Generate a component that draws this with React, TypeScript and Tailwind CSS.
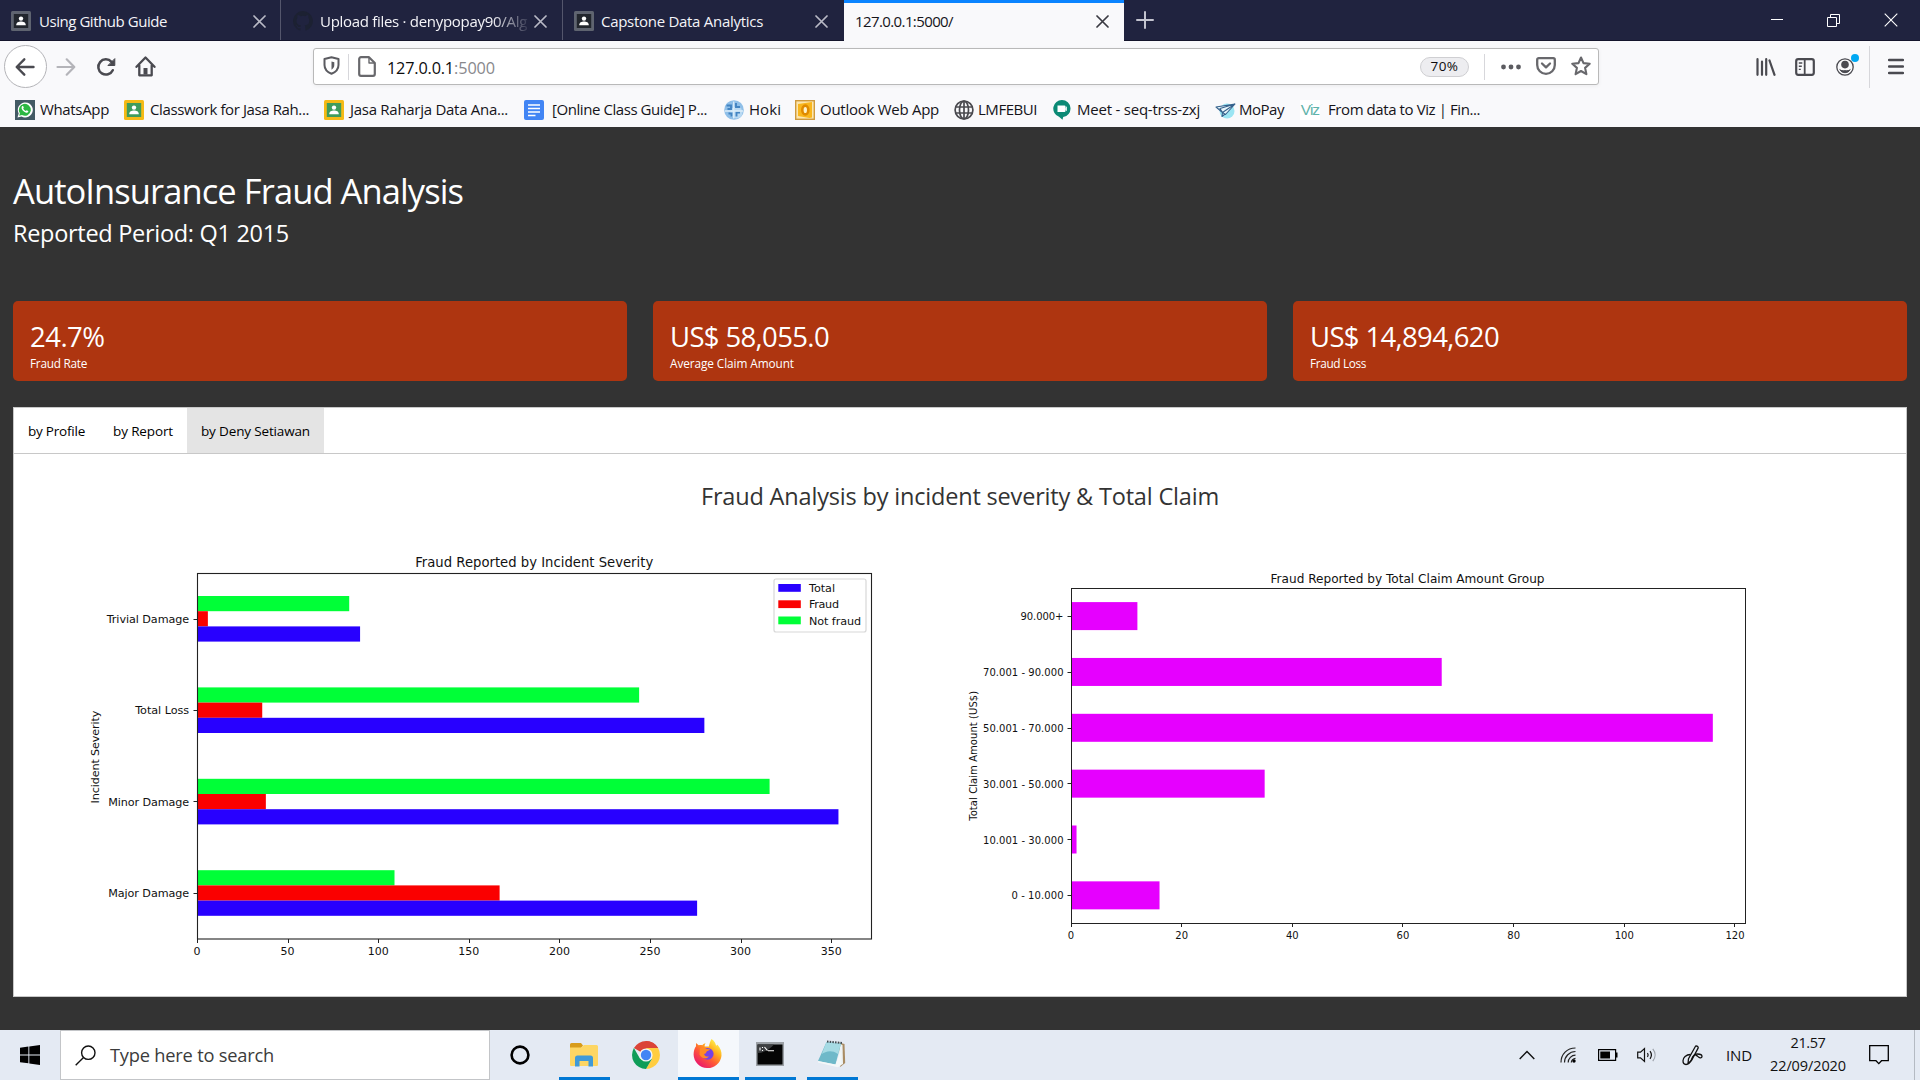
import { useLayoutEffect, useRef, useState } from "react";
import type { ReactNode } from "react";

/* A single line of text whose letter spacing is adjusted to span the given width. */
function Label({ text, width, className = "" }: { text: string; width: number; className?: string }) {
  const ref = useRef<HTMLSpanElement>(null);
  const [spacing, setSpacing] = useState(0);
  useLayoutEffect(() => {
    if (ref.current) {
      const natural = ref.current.getBoundingClientRect().width;
      setSpacing((width - natural) / text.length);
    }
  }, [text, width]);
  return (
    <span ref={ref} className={`inline-block shrink-0 whitespace-pre ${className}`} style={{ letterSpacing: `${spacing}px` }}>
      {text}
    </span>
  );
}

function CloseIcon({ className = "text-[#b9bac6]" }: { className?: string }) {
  return (
    <svg width="13" height="13" viewBox="0 0 13 13" className={className}>
      <path d="M1 1l11 11M12 1L1 12" stroke="currentColor" strokeWidth="1.7" strokeLinecap="round" />
    </svg>
  );
}

function Person({ frame, board }: { frame: string; board: string }) {
  return (
    <svg width="20" height="20" viewBox="0 0 20 20" preserveAspectRatio="none" className="shrink-0">
      <rect width="20" height="20" rx="1.5" fill={frame} />
      <rect x="2.8" y="3" width="14.4" height="14" fill={board} />
      <circle cx="10" cy="7.6" r="2.2" fill="#fff" />
      <path d="M5.2 14.2c0-2.6 2.4-3.6 4.8-3.6s4.8 1 4.8 3.6z" fill="#fff" />
    </svg>
  );
}

function TabBar() {
  return (
    <div className="flex h-[41px] border-b border-[#14152c] bg-[#20233f] text-[15px] text-[#f4f4f8]">
      <div className="flex w-[281px] items-center border-r border-[#54566c] pt-0.5 pl-[11px]">
        <Person frame="#5f6470" board="#22262d" />
        <Label text="Using Github Guide" width={128} className="ml-2" />
        <span className="mr-[14px] ml-auto"><CloseIcon /></span>
      </div>
      <div className="flex w-[282px] items-center border-r border-[#54566c] pt-0.5 pl-3">
        <svg width="20" height="20" viewBox="0 0 16 16" className="shrink-0">
          <path fill="#1c2132" d="M8 0a8 8 0 0 0-2.5 15.6c.4 0 .5-.2.5-.4v-1.400c-2.200.5-2.700-1-2.700-1-.4-.9-.9-1.200-.9-1.200-.7-.5 0-.5 0-.5.8.1 1.200.8 1.200.8.7 1.200 1.900.9 2.300.7.100-.5.300-.9.500-1.100-1.800-.2-3.600-.9-3.600-4 0-.9.3-1.600.8-2.100 0-.2-.4-1 .1-2.100 0 0 .7-.2 2.200.8a7.500 7.500 0 0 1 4 0c1.500-1 2.200-.8 2.200-.8.5 1.100.1 1.900.1 2.100.5.500.8 1.200.8 2.100 0 3.100-1.900 3.800-3.700 4 .3.200.6.700.6 1.500v2.200c0 .2.100.500.500.400A8 8 0 0 0 8 0z" />
        </svg>
        <div className="ml-[7px] w-[208px] overflow-hidden [mask-image:linear-gradient(to_right,black_172px,transparent_212px)]">
          <Label text="Upload files · denypopay90/Alg" width={207} />
        </div>
        <span className="mr-[15px] ml-auto"><CloseIcon /></span>
      </div>
      <div className="flex w-[281px] items-center pt-0.5 pl-[11px]">
        <Person frame="#5f6470" board="#22262d" />
        <Label text="Capstone Data Analytics" width={162} className="ml-[7px]" />
        <span className="mr-4 ml-auto"><CloseIcon /></span>
      </div>
      <div className="-mb-px flex w-[280px] items-center border-t-[3px] border-[#0a84ff] bg-[#f9f9fb] pb-[3px] pl-[11px] text-[#15141a]">
        <Label text="127.0.0.1:5000/" width={98} className="pt-0.5" />
        <span className="mr-[15px] ml-auto pt-0.5"><CloseIcon className="text-[#3a3a42]" /></span>
      </div>
      <svg width="18" height="18" viewBox="0 0 18 18" className="mt-[11px] ml-3">
        <path d="M9 1v16M1 9h16" stroke="#c3c4cf" strokeWidth="2" strokeLinecap="round" />
      </svg>
      <div className="mr-[22px] ml-auto flex items-center text-white">
        <svg width="12" height="12" viewBox="0 0 12 12"><path d="M0 5.500h12" stroke="currentColor" strokeWidth="1" /></svg>
        <svg width="13" height="13" viewBox="0 0 13 13" fill="none" stroke="currentColor" className="mx-[44px] shrink-0">
          <path d="M.5 3.500h9v9h-9zM3.500 3.500v-3h9v9h-3" />
        </svg>
        <svg width="14" height="14" viewBox="0 0 14 14" className="shrink-0"><path d="M.7.7l12.600 12.600M13.300.7L.7 13.300" stroke="currentColor" strokeWidth="1.100" /></svg>
      </div>
    </div>
  );
}

function Cell({ className, children }: { className: string; children: ReactNode }) {
  return <div className={`flex shrink-0 items-center justify-center ${className}`}>{children}</div>;
}

function NavBar() {
  return (
    <div className="flex h-[51px] items-center pl-1 text-[#4a4a50]">
      <div className="flex size-[43px] shrink-0 items-center justify-center rounded-full border border-[#b4b4b8] bg-white pr-px">
        <svg width="20" height="20" viewBox="0 0 20 20" fill="none" stroke="currentColor" strokeWidth="2.400" strokeLinecap="round" strokeLinejoin="round">
          <path d="M18.500 10H2M9.300 2.300L1.700 10l7.600 7.700" />
        </svg>
      </div>
      <Cell className="w-[38px] text-[#b4b4b9]">
        <svg width="20" height="20" viewBox="0 0 20 20" fill="none" stroke="currentColor" strokeWidth="2.200" strokeLinecap="round" strokeLinejoin="round">
          <path d="M1.500 10H18M10.700 2.300l7.600 7.700-7.600 7.700" />
        </svg>
      </Cell>
      <Cell className="w-[41px]">
        <svg width="20" height="20" viewBox="0 0 20 20" fill="none" stroke="currentColor" strokeWidth="2.500" strokeLinecap="round">
          <path d="M16.800 13.200A7.600 7.600 0 1 1 15.500 4.800l1.500 1.700" />
          <path d="M18.800 2v6.500h-6.500z" fill="currentColor" strokeWidth="1" strokeLinejoin="round" />
        </svg>
      </Cell>
      <Cell className="w-[39px]">
        <svg width="21" height="21" viewBox="0 0 21 21" fill="none" stroke="currentColor" strokeWidth="2.300" strokeLinecap="round" strokeLinejoin="round">
          <path d="M1.500 10.800l9-9.300 9 9.300M4.300 9.500v9.800h12.400V9.500" />
          <path d="M10.500 12v6.500" strokeWidth="4" strokeLinecap="butt" />
        </svg>
      </Cell>
      <div className="ml-[148px] flex h-[37px] w-[1286px] shrink-0 items-center rounded-[3px] border border-[#b9b9b9] bg-white shadow-[0_1px_4px_rgba(0,0,0,0.06)]">
        <Cell className="w-[34px] pb-[2px] text-[#5b5b60]">
          <svg width="17" height="19" viewBox="0 0 17 19" fill="none" stroke="currentColor" strokeWidth="2">
            <path d="M8.500 1.200L15.500 3v6c0 4-2.600 7-7 8.800C4.100 16 1.500 13 1.500 9V3z" strokeLinejoin="round" />
            <path d="M8.500 5.500v8.200c1.700-1.200 2.800-2.500 2.800-4.700V6.200z" fill="currentColor" stroke="none" />
          </svg>
        </Cell>
        <div className="h-[26px] w-px bg-[#d7d7db]" />
        <Cell className="w-[36px] text-[#68686c]">
          <svg width="18" height="21" viewBox="0 0 18 21" fill="none" stroke="currentColor" strokeWidth="2.200" strokeLinejoin="round">
            <path d="M3 1.200h8l5.800 5.800v11a1.800 1.800 0 0 1-1.800 1.800H3a1.800 1.800 0 0 1-1.800-1.800V3A1.800 1.800 0 0 1 3 1.200z" />
            <path d="M11 1.500V7h5.500" strokeWidth="1.400" />
          </svg>
        </Cell>
        <Label text="127.0.0.1" width={67} className="ml-[2px] pt-[3px] text-[16.250px] text-[#0c0c0d]" />
        <Label text=":5000" width={41} className="pt-[3px] text-[16.250px] text-[#88888c]" />
        <div className="mr-[15px] ml-auto flex h-5 w-[49px] items-center justify-center rounded-full border border-[#cfcfd2] bg-[#ededf0] text-[#0c0c0d]">
          <Label text="70%" width={28} className="pt-px text-[13.500px] leading-none" />
        </div>
        <div className="mr-2 h-[26px] w-px bg-[#d7d7db]" />
        <Cell className="w-[35px] text-[#5b5b60]">
          <svg width="20" height="6" viewBox="0 0 20 6" fill="currentColor">
            <circle cx="2.500" cy="3" r="2.400" /><circle cx="10" cy="3" r="2.400" /><circle cx="17.500" cy="3" r="2.400" />
          </svg>
        </Cell>
        <Cell className="w-[36px] pb-px text-[#68686c]">
          <svg width="20" height="18" viewBox="0 0 20 18" fill="none" stroke="currentColor" strokeWidth="2.300" strokeLinecap="round" strokeLinejoin="round">
            <path d="M2.700 1.200h14.600A1.500 1.500 0 0 1 18.800 2.700V8a8.800 8.800 0 0 1-17.600 0V2.700A1.500 1.500 0 0 1 2.700 1.200z" />
            <path d="M6 6.500l4 3.800 4-3.800" />
          </svg>
        </Cell>
        <Cell className="w-[34px] pb-px text-[#68686c]">
          <svg width="20" height="20" viewBox="0 0 20 20" fill="none" stroke="currentColor" strokeWidth="2.100" strokeLinejoin="round">
            <path d="M10 1.500l2.500 5.600 6.200.7-4.600 4.100 1.300 6.300-5.400-3.200-5.400 3.200 1.300-6.300L1.300 7.800l6.200-.7z" />
          </svg>
        </Cell>
      </div>
      <div className="mr-4 ml-auto flex h-full items-center">
        <Cell className="w-[39px]">
          <svg width="20" height="18" viewBox="0 0 20 18" fill="none" stroke="currentColor" strokeWidth="2.200" strokeLinecap="round">
            <path d="M1.500 1.200v15.600M6 3.500v13.300M10.200 1.200v15.600" /><path d="M13.500 2.500L18.500 16.800" />
          </svg>
        </Cell>
        <Cell className="w-[40px]">
          <svg width="20" height="18" viewBox="0 0 20 18" fill="none" stroke="currentColor" strokeWidth="2.200">
            <rect x="1.200" y="1.200" width="17.600" height="15.600" rx="2" /><path d="M9.700 1.500v15" strokeWidth="1.800" /><path d="M3.800 5h3.500M3.800 8.200h3M3.800 11.400h2" strokeWidth="1.400" />
          </svg>
        </Cell>
        <Cell className="relative w-[40px]">
          <svg width="18" height="18" viewBox="0 0 18 18" fill="none" stroke="currentColor">
            <circle cx="9" cy="9" r="8.200" strokeWidth="1.300" />
            <circle cx="9" cy="6.600" r="3.800" fill="currentColor" stroke="none" />
            <path d="M3.800 11.500c1 1.400 2.800 1.200 5.200 1.200s4.200.2 5.200-1.200a5.800 5.800 0 0 1-10.400 0z" fill="currentColor" />
          </svg>
          <span className="absolute -top-[4px] right-[6px] size-2 rounded-full bg-[#00a8f3]" />
        </Cell>
        <div className="ml-[4px] h-[42px] w-px bg-[#d7d7db]" />
        <svg width="16" height="17" viewBox="0 0 16 17" className="ml-[18px]">
          <path d="M1 2h14M1 8.500h14M1 15h14" stroke="currentColor" strokeWidth="2.400" strokeLinecap="round" />
        </svg>
      </div>
    </div>
  );
}

function WhatsAppIcon() {
  return (
    <svg width="20" height="20" viewBox="0 0 20 20">
      <rect width="20" height="20" fill="#435a64" />
      <path d="M2.500 17.500l1.200-4A7.500 7.500 0 1 1 6.500 16.400z" fill="#fff" />
      <path d="M4.200 15.800l.7-2.600A6 6 0 1 1 7 15.100z" fill="#2cb742" />
      <path d="M7.300 6c.6-.3.9 0 1.100.5l.4 1-.6.900c.5 1.200 1.400 2 2.600 2.600l.8-.8 1.600.8c.3.300 0 1.300-.6 1.600-1.700.9-6.500-2.600-6-5.200.1-.6.400-1.200.7-1.400z" fill="#fff" />
    </svg>
  );
}

function DocsIcon() {
  return (
    <svg width="20" height="20" viewBox="0 0 20 20">
      <rect width="20" height="20" rx="2" fill="#4285f4" />
      <path d="M4 5h12M4 8.500h12M4 12h12M4 15.500h7.500" stroke="#fff" strokeWidth="1.600" />
    </svg>
  );
}

function HokiIcon() {
  return (
    <svg width="20" height="20" viewBox="0 0 20 20">
      <circle cx="10" cy="10" r="9.800" fill="#8fbfe8" />
      <circle cx="12.500" cy="12.500" r="6" fill="#b9d9f2" />
      <path d="M2.500 5.500h4.500v3.500H3.500M12 3v4h4M4.500 13.500h3v3M12.500 16.500v-4h3.500" fill="none" stroke="#4384c2" strokeWidth="1.900" />
      <path d="M9.700 1.500v17M1 11h18" stroke="#dcedf9" strokeWidth="1.300" />
    </svg>
  );
}

function OutlookIcon() {
  return (
    <svg width="20" height="20" viewBox="0 0 20 20">
      <rect x=".7" y=".7" width="18.600" height="18.600" fill="#fce6ae" stroke="#cf9a3d" strokeWidth="1.400" />
      <path d="M3 4l14-2v15.500L14.500 18 3 16z" fill="#f9b61c" />
      <ellipse cx="10.300" cy="10" rx="3" ry="4.400" fill="#fff3c9" stroke="#e08a00" strokeWidth="2.600" />
    </svg>
  );
}

function GlobeIcon() {
  return (
    <svg width="20" height="20" viewBox="0 0 20 20" fill="none" stroke="#4a4a4f" strokeWidth="1.700">
      <circle cx="10" cy="10" r="8.900" /><ellipse cx="10" cy="10" rx="4.500" ry="8.900" /><path d="M10 1v18M1.500 7h17M1.500 13h17" />
    </svg>
  );
}

function MeetIcon() {
  return (
    <svg width="18" height="20" viewBox="0 0 18 20">
      <path d="M9 0a8.600 8.600 0 0 1 1.200 17.100L9.500 19.800 6 16.700A8.600 8.600 0 0 1 9 0z" fill="#0b8a75" />
      <path d="M4.500 5.500h7a1 1 0 0 1 1 1v4.500a1 1 0 0 1-1 1h-7z" fill="#fff" /><path d="M12 8l2-1.700v5L12 9.800z" fill="#d5ece8" />
    </svg>
  );
}

function MoPayIcon() {
  return (
    <svg width="21" height="20" viewBox="0 0 21 20">
      <circle cx="12" cy="11" r="7.500" fill="#9be5f3" />
      <path d="M1 7l19-3-9.500 10.500-3-2zM20 4L7.500 12.500M7.500 12.500L5 8.500 20 4M7.500 12.500l-.5 4 3-2.500" fill="#e9f7fc" stroke="#35618c" strokeWidth="1.100" strokeLinejoin="round" />
    </svg>
  );
}

function VizIcon() {
  return (
    <div className="flex h-5 w-5 items-center justify-center bg-white font-['Liberation_Sans',sans-serif] text-[15.500px] leading-none tracking-[-1px] text-[#5fb3aa]">
      Viz
    </div>
  );
}

function Bookmark({ icon, text, width, gap = "gap-[5px]" }: { icon: ReactNode; text: string; width: number; gap?: string }) {
  return (
    <div className={`flex items-center ${gap}`}>
      {icon}
      <Label text={text} width={width} />
    </div>
  );
}

function BookmarksBar() {
  const room = <Person frame="#f5ba15" board="#3f9c5b" />;
  return (
    <div className="grid h-[35px] grid-cols-[109px_200px_200px_200px_71px_159px_99px_162px_85px_200px] items-center pl-[15px] text-[15px] text-[#15141a]">
      <Bookmark icon={<WhatsAppIcon />} text="WhatsApp" width={69} />
      <Bookmark icon={room} text="Classwork for Jasa Rah..." width={159} gap="gap-[6px]" />
      <Bookmark icon={room} text="Jasa Raharja Data Ana..." width={158} gap="gap-[6px]" />
      <Bookmark icon={<DocsIcon />} text="[Online Class Guide] P..." width={155} gap="gap-2" />
      <Bookmark icon={<HokiIcon />} text="Hoki" width={32} gap="gap-[5px]" />
      <Bookmark icon={<OutlookIcon />} text="Outlook Web App" width={119} />
      <Bookmark icon={<GlobeIcon />} text="LMFEBUI" width={59} gap="gap-1" />
      <Bookmark icon={<MeetIcon />} text="Meet - seq-trss-zxj" width={123} gap="gap-[6px]" />
      <Bookmark icon={<MoPayIcon />} text="MoPay" width={45} gap="gap-[3px]" />
      <Bookmark icon={<VizIcon />} text="From data to Viz | Fin..." width={152} gap="gap-2" />
    </div>
  );
}

const stats = [
  { value: "24.7%", valueWidth: 74.5, label: "Fraud Rate", labelWidth: 57 },
  { value: "US$ 58,055.0", valueWidth: 159, label: "Average Claim Amount", labelWidth: 124 },
  { value: "US$ 14,894,620", valueWidth: 189, label: "Fraud Loss", labelWidth: 56 },
];

const severity = [
  { name: "Trivial Damage", w: 82.5, notFraud: 84, fraud: 6, total: 90 },
  { name: "Total Loss", w: 54, notFraud: 244, fraud: 36, total: 280 },
  { name: "Minor Damage", w: 81, notFraud: 316, fraud: 38, total: 354 },
  { name: "Major Damage", w: 81, notFraud: 109, fraud: 167, total: 276 },
];

const legend = [
  { name: "Total", fill: "#2800ff", w: 26, y: 584 },
  { name: "Fraud", fill: "#fa0000", w: 30, y: 600.3 },
  { name: "Not fraud", fill: "#00ff37", w: 52, y: 616.5 },
];

function SeverityChart() {
  const x0 = 197;
  const unit = 1.812;
  const h = 15.2;
  return (
    <svg width="876" height="483" viewBox="14 513 876 483" fill="#111" fontFamily='"DejaVu Sans", sans-serif' fontSize="11.200">
      <text x="534.200" y="566.700" fontSize="13.200" textAnchor="middle" textLength="238">Fraud Reported by Incident Severity</text>
      <text transform="translate(99.300 757) rotate(-90)" textAnchor="middle" textLength="93">Incident Severity</text>
      {severity.map((row, i) => {
        const y = 618.8 + i * 91.4;
        return (
          <g key={row.name}>
            <rect x={x0} y={y - 1.5 * h} width={row.notFraud * unit} height={h} fill="#00ff37" />
            <rect x={x0} y={y - 0.5 * h} width={row.fraud * unit} height={h} fill="#fa0000" />
            <rect x={x0} y={y + 0.5 * h} width={row.total * unit} height={h} fill="#2800ff" />
            <path d={`M193.500 ${Math.floor(y + 0.4) + 0.5}h4`} stroke="#222" />
            <text x="189.200" y={y + 4.2} textAnchor="end" textLength={row.w}>{row.name}</text>
          </g>
        );
      })}
      {[0, 50, 100, 150, 200, 250, 300, 350].map((v) => (
        <g key={v}>
          <path d={`M${Math.floor(x0 + 0.4 + v * unit) + 0.5} 939v4`} stroke="#222" />
          <text x={x0 + v * unit} y="955.400" fontSize="11" textAnchor="middle">{v}</text>
        </g>
      ))}
      <rect x="197.500" y="573.500" width="674" height="365.500" fill="none" stroke="#222" strokeWidth="1.100" />
      <rect x="774" y="579" width="92" height="53" rx="2" fill="#fff" stroke="#d8d8d8" strokeWidth="1.200" />
      {legend.map((l) => (
        <g key={l.name}>
          <rect x="778.300" y={l.y} width="22.500" height="7.800" fill={l.fill} />
          <text x="809" y={l.y + 8} textLength={l.w}>{l.name}</text>
        </g>
      ))}
    </svg>
  );
}

const claims = [
  { name: "90.000+", w: 43, value: 12 },
  { name: "70.001 - 90.000", w: 80.5, value: 67 },
  { name: "50.001 - 70.000", w: 80.5, value: 116 },
  { name: "30.001 - 50.000", w: 80.5, value: 35 },
  { name: "10.001 - 30.000", w: 80.5, value: 1 },
  { name: "0 - 10.000", w: 52, value: 16 },
];

function ClaimChart() {
  const x0 = 1071;
  const unit = 5.533;
  return (
    <svg width="1016" height="483" viewBox="890 513 1016 483" fill="#111" fontFamily='"DejaVu Sans", sans-serif' fontSize="10">
      <text x="1407.500" y="582.500" fontSize="12.100" textAnchor="middle" textLength="274">Fraud Reported by Total Claim Amount Group</text>
      <text transform="translate(976.500 755.800) rotate(-90)" textAnchor="middle" textLength="130">Total Claim Amount (US$)</text>
      {claims.map((row, i) => {
        const y = 616.3 + i * 55.85;
        return (
          <g key={row.name}>
            <rect x={x0} y={y - 14.2} width={row.value * unit} height="28" fill="#e600ff" />
            <path d={`M1067.500 ${Math.floor(y) + 0.5}h4`} stroke="#222" />
            <text x="1063.500" y={y + 3.8} textAnchor="end" textLength={row.w}>{row.name}</text>
          </g>
        );
      })}
      {[0, 20, 40, 60, 80, 100, 120].map((v) => (
        <g key={v}>
          <path d={`M${Math.floor(x0 + v * unit) + 0.5} 923v4`} stroke="#222" />
          <text x={x0 + v * unit} y="938.500" textAnchor="middle">{v}</text>
        </g>
      ))}
      <rect x="1071.500" y="588.500" width="674" height="335" fill="none" stroke="#222" />
    </svg>
  );
}

function Dashboard() {
  return (
    <main className="flex h-[903px] flex-col bg-[#333333] px-[13px] text-white">
      <h1 className="mt-[44px] flex h-10 items-center text-[34.500px]"><Label text="AutoInsurance Fraud Analysis" width={450} /></h1>
      <h2 className="mt-[7px] flex h-8 items-center text-[23.500px]"><Label text="Reported Period: Q1 2015" width={276} /></h2>
      <div className="mt-[51px] grid grid-cols-3 gap-[26px]">
        {stats.map((s) => (
          <div key={s.label} className="flex h-20 flex-col rounded-[5px] bg-[#ae3510] pt-[21px] pl-[17px]">
            <div className="flex h-[30px] items-center text-[27.500px]"><Label text={s.value} width={s.valueWidth} /></div>
            <div className="mt-[4px] flex h-4 items-center text-[11.800px]"><Label text={s.label} width={s.labelWidth} /></div>
          </div>
        ))}
      </div>
      <section className="mt-[26px] flex h-[590px] flex-col border border-[#c8c8c8] bg-white text-black">
        <div className="flex h-[46px] shrink-0 border-b border-[#c8c8c8] text-[13.500px]">
          <div className="flex w-[86px] items-center pt-0.5 pl-[14px]"><Label text="by Profile" width={57} /></div>
          <div className="flex w-[87px] items-center pt-0.5 pl-[13px]"><Label text="by Report" width={60} /></div>
          <div className="flex w-[137px] items-center bg-[#e4e4e4] pt-0.5 pl-[14px]"><Label text="by Deny Setiawan" width={109} /></div>
        </div>
        <h3 className="mt-[26px] flex h-[33px] shrink-0 items-center justify-center text-[23.500px] text-[#333]">
          <Label text="Fraud Analysis by incident severity &amp; Total Claim" width={518} />
        </h3>
        <div className="flex">
          <SeverityChart />
          <ClaimChart />
        </div>
      </section>
    </main>
  );
}

function ExplorerIcon() {
  return (
    <svg width="28" height="24" viewBox="0 0 28 24">
      <path d="M0 1.500A1.500 1.500 0 0 1 1.500 0H11l2 2.500L11 5H0z" fill="#d89c1a" />
      <path d="M0 4.500h11l3-2.500h12.500A1.500 1.500 0 0 1 28 3.500V22a1 1 0 0 1-1 1H1a1 1 0 0 1-1-1z" fill="#fdd663" />
      <path d="M5 23.500V15a2.500 2.500 0 0 1 2.500-2.500h13A2.500 2.500 0 0 1 23 15v8.500h-4.500V18h-9v5.500z" fill="#3f9ad8" />
    </svg>
  );
}

function ChromeIcon() {
  return (
    <svg width="28" height="28" viewBox="0 0 28 28">
      <path d="M14 14L1.900 7A14 14 0 0 1 26.100 7z" fill="#db4437" />
      <path d="M14 0a14 14 0 0 1 12.100 7H14z" fill="#db4437" />
      <path d="M14 7h12.100A14 14 0 0 1 14 28l6.100-10.500z" fill="#ffcd40" />
      <path d="M1.900 7A14 14 0 0 0 14 28l6.100-10.500L14 20 7.900 17.500z" fill="#0f9d58" />
      <circle cx="14" cy="14" r="6.600" fill="#f4f6f4" />
      <circle cx="14" cy="14" r="5.200" fill="#4285f4" />
    </svg>
  );
}

function FirefoxIcon() {
  return (
    <svg width="29" height="30" viewBox="0 0 29 30">
      <defs>
        <linearGradient id="ff-body" x1="0.850" y1="0.100" x2="0.200" y2="0.950">
          <stop offset="0" stopColor="#fff14f" /><stop offset=".3" stopColor="#ffb01e" /><stop offset=".6" stopColor="#ff5a36" /><stop offset="1" stopColor="#e9146f" />
        </linearGradient>
      </defs>
      <path d="M18.500 0c3 2 4.200 4.500 4.500 6.600 1.100-.3 1.300-1.200 1.300-1.200 3.300 3.800 4.500 7.200 4.200 11.300A14 14 0 0 1 .6 15.500c0-3.800 1-6.300 2.400-8.300V4l2.700 2.300c1.500-.4 3-.3 3.500 0 1-1.400 2.500-1.900 3.500-2.100-1 1-1.200 2.500-1 3.300 2 .2 4 0 4 .2.800-2.700 1.500-5.700 2.800-7.700z" fill="url(#ff-body)" />
      <circle cx="14.700" cy="14.800" r="5.900" fill="#7542e5" />
      <path d="M7 9.500c2.500-2 5-1 6.500.5l3.500.3c-.7 1.700-3.200 1.600-3.700 2.600.1 1.100-.8 1.800-2.300 2 .5 2.200 3 3 5 2.300-1.500 2.800-7 3.200-9.500-1.700z" fill="#ff8a25" />
    </svg>
  );
}

function ConsoleIcon() {
  return (
    <svg width="28" height="24" viewBox="0 0 28 24">
      <rect width="28" height="24" fill="#9ba0a5" />
      <rect x="1.500" y="2.500" width="25" height="20" fill="#050505" />
      <path d="M1.500 11C9 10.500 14 7 18 2.500H1.500z" fill="#3d3f41" />
      <path d="M4 5.500v3M6.500 5v1M6.500 8v1M8.500 5l3 3.700M12 8.700h6" stroke="#fff" strokeWidth="1.100" />
    </svg>
  );
}

function NotepadIcon() {
  return (
    <svg width="29" height="28" viewBox="0 0 29 28">
      <path d="M22 2.500l5.500 1.500.7 19-5 4z" fill="#a98c63" />
      <path d="M23 4l2.500 1 .5 19-5.500 3z" fill="#eef3f4" />
      <path d="M9.500 2L24 3.500 18.500 24.500 1 21z" fill="#6fb9c9" />
      <path d="M9.500 2L24 3.500l-3 10.500C14 9 8 12 4.800 14z" fill="#a6dbe4" />
      <path d="M1 21l17.500 3.500 5-13L24 25l-3 2.200-3.500-.8L1 22.400z" fill="#f4f8f8" />
      <path d="M10 1.500l15 1.500" stroke="#3f4a50" strokeWidth="2" strokeDasharray="1.500 1.200" />
    </svg>
  );
}

function Taskbar() {
  return (
    <footer className="flex h-[50px] bg-[#e4eaf3] text-[#111]">
      <Cell className="w-[60px]">
        <svg width="20" height="20" viewBox="0 0 20 20" fill="#000">
          <path d="M0 2.800l8.400-1.200v7.900H0zM9.300 1.400L20 0v9.500H9.300zM0 10.400h8.400v7.900L0 17.200zM9.300 10.400H20V20L9.300 18.500z" />
        </svg>
      </Cell>
      <div className="flex w-[430px] items-center border border-[#c3c5c8] bg-white pl-[14px] text-[#3b3b3b]">
        <svg width="21" height="21" viewBox="0 0 21 21" fill="none" stroke="#111" strokeWidth="1.400" className="mr-px"><circle cx="13.300" cy="7.700" r="6.700" /><path d="M8.500 12.500L.7 20.300" /></svg>
        <Label text="Type here to search" width={164} className="ml-[13px] text-[18.250px]" />
      </div>
      <Cell className="w-[60px]">
        <svg width="20" height="20" viewBox="0 0 20 20"><circle cx="10" cy="10" r="8.400" fill="none" stroke="#000" strokeWidth="2.600" /></svg>
      </Cell>
      <Cell className="ml-[9px] w-[51px] border-b-[3px] border-[#0078d4] pt-[2px] pr-[2px]"><ExplorerIcon /></Cell>
      <Cell className="w-[68px] pl-[3px]"><ChromeIcon /></Cell>
      <Cell className="w-[61px] border-b-[3px] border-[#0078d4] bg-[#f5f8fc] pt-px pr-[2px]"><FirefoxIcon /></Cell>
      <Cell className="ml-[6px] w-[51px] border-b-[3px] border-[#0078d4] pt-px pr-[2px]"><ConsoleIcon /></Cell>
      <Cell className="ml-[11px] w-[51px] border-b-[3px] border-[#0078d4] pt-px pr-[2px]"><NotepadIcon /></Cell>
      <div className="ml-auto flex">
        <Cell className="w-[40px]">
          <svg width="16" height="10" viewBox="0 0 16 10"><path d="M.7 9L8 1.500 15.300 9" fill="none" stroke="#111" strokeWidth="1.400" /></svg>
        </Cell>
        <Cell className="w-[42px]">
          <svg width="16" height="16" viewBox="0 0 16 16" fill="none" stroke="#222" strokeWidth="1.200">
            <path d="M1 15.500C1 7 7 1 15.500 1M4.500 15.500c0-6 5-11 11-11M8.200 15.500c0-4 3.300-7.300 7.300-7.300M11.300 15.500c0-2 2-4.200 4.200-4.200" /><circle cx="14" cy="14" r="1.700" fill="#000" stroke="none" />
          </svg>
        </Cell>
        <Cell className="w-[38px]">
          <svg width="20" height="12" viewBox="0 0 20 12"><path d="M.6.600h17v10.800h-17z" fill="none" stroke="#000" strokeWidth="1.200" /><path d="M2.300 2.500H12v7H2.300zM18 3.500h1.500v5H18z" /></svg>
        </Cell>
        <Cell className="w-[40px]">
          <svg width="21" height="16" viewBox="0 0 21 16" fill="none" stroke="#111" strokeWidth="1.200">
            <path d="M.7 5.200h2.800L7.500 1.500v13l-4-3.700H.7z" /><path d="M10.500 6c.8 1.200.8 2.800 0 4M13 4.200c1.700 2.300 1.700 5.300 0 7.600" /><path d="M15.800 1.800c3 3.700 3 8.700 0 12.400" stroke="#9aa0a8" />
          </svg>
        </Cell>
        <Cell className="w-[50px]">
          <svg width="21" height="21" viewBox="0 0 21 21" fill="none" stroke="#111" strokeWidth="1.300" strokeLinejoin="round">
            <path d="M13.500 1.200c1.600-.7 3.200.5 2.500 2.200L9.500 15.500 6 18.500l.5-4.800z" />
            <path d="M8.500 9.500C4 9.500 1 12.500 1 15.800c0 2 1 3.700 3 3.700 3 0 4.500-2.500 5.500-5 1-2.800 3-5.500 6-5.500 2.500 0 4.500 1 4.500 2.500s-2 1.800-3.500.5c-1-.9-1.800-1.800-3-2" />
          </svg>
        </Cell>
        <Cell className="w-[44px]"><Label text="IND" width={26} className="text-[15px]" /></Cell>
        <div className="flex w-[94px] flex-col items-center text-[14.500px] leading-[23px]">
          <Label text="21.57" width={35} className="pt-px" />
          <Label text="22/09/2020" width={76} />
        </div>
        <Cell className="w-[48px]">
          <svg width="20" height="20" viewBox="0 0 20 20" fill="none" stroke="#000" strokeWidth="1.300"><path d="M.7.700h18.600v15h-6.800L9.800 18.600 7 15.700H.7z" /></svg>
        </Cell>
        <div className="mr-[5px] ml-[11px] w-px bg-[#b4bac2]" />
      </div>
    </footer>
  );
}

export default function App() {
  return (
    <div className="flex h-[1080px] w-[1920px] flex-col overflow-hidden bg-[#f9f9fb] font-['Open_Sans','Noto_Sans',sans-serif]">
      <TabBar />
      <NavBar />
      <BookmarksBar />
      <Dashboard />
      <Taskbar />
    </div>
  );
}
